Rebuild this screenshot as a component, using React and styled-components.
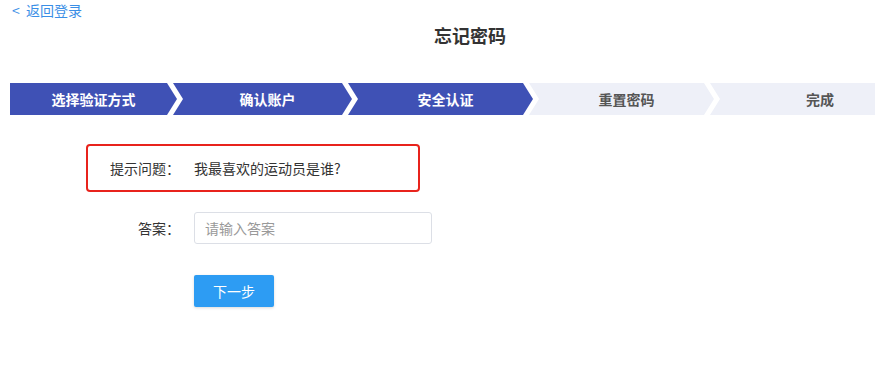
import styled, { createGlobalStyle } from "styled-components"

const GlobalStyle = createGlobalStyle`
body {
    margin: 0;
    background: #fff;
    font-family: "Noto Sans CJK SC", "Noto Sans", sans-serif;
    color: #333;
}
`

const steps = [
    { label: "选择验证方式", width: 167, done: true },
    { label: "确认账户", width: 179, done: true },
    { label: "安全认证", width: 185, done: true },
    { label: "重置密码", width: 185, done: false },
    { label: "完成", width: 210, done: false },
]

export default function App() {
    return (
        <Page>
            <GlobalStyle />
            <Header>
                <BackLink href="#">&lt;&nbsp; 返回登录</BackLink>
            </Header>
            <Title>忘记密码</Title>
            <StepBar>
                {steps.map((step, i) => (
                    <Step key={step.label} width={step.width} done={step.done} first={i === 0}>
                        {step.label}
                    </Step>
                ))}
            </StepBar>
            <Form>
                <Row highlight>
                    <Label>提示问题：</Label>
                    <Value>我最喜欢的运动员是谁?</Value>
                </Row>
                <Row className="answer">
                    <Label>答案：</Label>
                    <Input placeholder="请输入答案" />
                </Row>
                <Actions>
                    <NextButton>下一步</NextButton>
                </Actions>
            </Form>
        </Page>
    )
}

const Page = styled.div`
width: 875px;
height: 379px;
overflow: hidden;
`

const Header = styled.div`
height: 20px;
padding-left: 12px;
`

const BackLink = styled.a`
display: block;
font-size: 14px;
line-height: 20px;
color: #3a8ee6;
text-decoration: none;
`

const Title = styled.h2`
margin: 0;
padding-left: 65px;
height: 30px;
line-height: 30px;
text-align: center;
font-size: 18px;
font-weight: 700;
color: #333;
`

const StepBar = styled.div`
display: flex;
margin: 33px 0 0 10px;
width: 865px;
height: 32px;
overflow: hidden;
`

const Step = styled.div`
flex: 0 0 ${props => props.width}px;
margin-left: ${props => props.first ? 0 : -4}px;
padding-left: ${props => props.first ? 0 : 10}px;
box-sizing: border-box;
display: flex;
align-items: center;
justify-content: center;
font-size: 14px;
font-weight: 700;
background: ${props => props.done ? '#3f51b5' : '#eef0f8'};
color: ${props => props.done ? '#fff' : '#555'};
clip-path: ${props => props.first
        ? 'polygon(0 0, calc(100% - 10px) 0, 100% 50%, calc(100% - 10px) 100%, 0 100%)'
        : 'polygon(0 0, calc(100% - 10px) 0, 100% 50%, calc(100% - 10px) 100%, 0 100%, 10px 50%)'};
`

const Form = styled.div`
margin: 29px 0 0 86px;
font-size: 14px;

.answer {
    margin-top: 18px;
}
`

const Row = styled.div`
display: flex;
align-items: center;
width: ${props => props.highlight ? '334px' : 'auto'};
box-sizing: border-box;
min-height: ${props => props.highlight ? 48 : 36}px;
border: 2px solid ${props => props.highlight ? '#e8231c' : 'transparent'};
border-radius: 4px;
gap: 14px;
`

const Label = styled.span`
flex: 0 0 92px;
text-align: right;
color: #333;
`

const Value = styled.span`
color: #333;
`

const Input = styled.input`
flex: 0 0 238px;
width: 238px;
height: 32px;
box-sizing: border-box;
border: 1px solid #dcdfe6;
border-radius: 3px;
padding: 0 10px;
font-family: inherit;
font-size: 14px;
color: #333;
outline: none;

&::placeholder {
    color: #999;
}
`

const Actions = styled.div`
margin-top: 29px;
padding-left: 108px;
`

const NextButton = styled.button`
width: 80px;
height: 32px;
border: none;
border-radius: 2px;
background: #2d9cf3;
color: #fff;
font-family: inherit;
font-size: 14px;
box-shadow: 0 1px 3px rgba(0, 0, 0, 0.15);
cursor: pointer;
`
